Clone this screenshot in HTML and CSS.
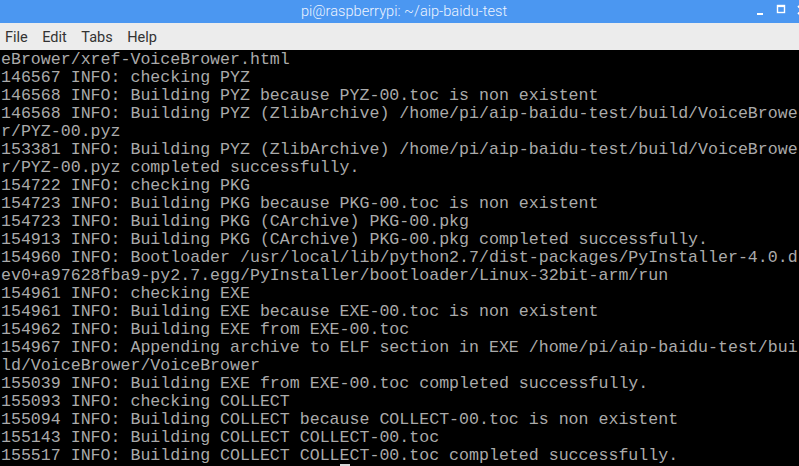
FILE: index.html
```html
<!DOCTYPE html>
<html>
<head>
<meta charset="utf-8">
<link rel="stylesheet" href="styles.css">
</head>
<body>
<div class="window">
  <div class="titlebar">
    <div class="title">pi@raspberrypi: ~/aip-baidu-test</div>
    <div class="controls">
      <svg class="ctl" width="12" height="12" viewBox="0 0 12 12"><rect x="3" y="9" width="6" height="2" fill="#fff"/></svg>
      <svg class="ctl" width="12" height="12" viewBox="0 0 12 12"><rect x="2.5" y="1.5" width="7" height="7" fill="none" stroke="#fff" stroke-width="1.4"/><rect x="2.5" y="1.5" width="7" height="1.6" fill="#fff"/></svg>
      <svg class="ctl" width="12" height="12" viewBox="0 0 12 12"><path d="M2 2 L10 10 M10 2 L2 10" stroke="#fff" stroke-width="1.8"/></svg>
    </div>
  </div>
  <div class="menubar">
    <span class="menu-item">File</span>
    <span class="menu-item">Edit</span>
    <span class="menu-item">Tabs</span>
    <span class="menu-item">Help</span>
  </div>
  <pre class="terminal">eBrower/xref-VoiceBrower.html
146567 INFO: checking PYZ
146568 INFO: Building PYZ because PYZ-00.toc is non existent
146568 INFO: Building PYZ (ZlibArchive) /home/pi/aip-baidu-test/build/VoiceBrowe
r/PYZ-00.pyz
153381 INFO: Building PYZ (ZlibArchive) /home/pi/aip-baidu-test/build/VoiceBrowe
r/PYZ-00.pyz completed successfully.
154722 INFO: checking PKG
154723 INFO: Building PKG because PKG-00.toc is non existent
154723 INFO: Building PKG (CArchive) PKG-00.pkg
154913 INFO: Building PKG (CArchive) PKG-00.pkg completed successfully.
154960 INFO: Bootloader /usr/local/lib/python2.7/dist-packages/PyInstaller-4.0.d
ev0+a97628fba9-py2.7.egg/PyInstaller/bootloader/Linux-32bit-arm/run
154961 INFO: checking EXE
154961 INFO: Building EXE because EXE-00.toc is non existent
154962 INFO: Building EXE from EXE-00.toc
154967 INFO: Appending archive to ELF section in EXE /home/pi/aip-baidu-test/bui
ld/VoiceBrower/VoiceBrower
155039 INFO: Building EXE from EXE-00.toc completed successfully.
155093 INFO: checking COLLECT
155094 INFO: Building COLLECT because COLLECT-00.toc is non existent
155143 INFO: Building COLLECT COLLECT-00.toc
155517 INFO: Building COLLECT COLLECT-00.toc completed successfully.
                                  <span class="cursor"> </span></pre>
</div>
</body>
</html>
```

FILE: styles.css
```css
html, body {
  margin: 0;
  padding: 0;
  width: 799px;
  height: 466px;
  overflow: hidden;
  background: #000;
}

.window {
  display: flex;
  flex-direction: column;
  width: 799px;
  height: 466px;
  overflow: hidden;
}

.titlebar {
  height: 23px;
  background: #4b97f1;
  position: relative;
  display: flex;
  align-items: center;
  justify-content: center;
  flex-shrink: 0;
}

.title {
  font-family: Roboto, "Noto Sans", sans-serif;
  font-weight: 300;
  font-size: 14.6px;
  color: #eef4ff;
  margin-top: -2px;
  margin-left: 9px;
}

.controls {
  position: absolute;
  right: -9px;
  top: 4px;
  display: flex;
  gap: 9px;
}

.ctl {
  display: block;
}

.menubar {
  height: 27px;
  background: #ececec;
  display: flex;
  align-items: center;
  padding-left: 5px;
  gap: 14.5px;
  flex-shrink: 0;
}

.menu-item {
  font-family: Roboto, "Noto Sans", sans-serif;
  font-size: 14.5px;
  color: #333;
  margin-top: 1px;
}

.terminal {
  margin: 0;
  padding: 1px 0 0 1px;
  flex: 1;
  background: #000;
  color: #aaaaaa;
  font-family: "Liberation Mono", monospace;
  font-size: 16.6px;
  line-height: 18px;
  white-space: pre;
  overflow: hidden;
}

.cursor {
  background: #d6d6d6;
}
```
